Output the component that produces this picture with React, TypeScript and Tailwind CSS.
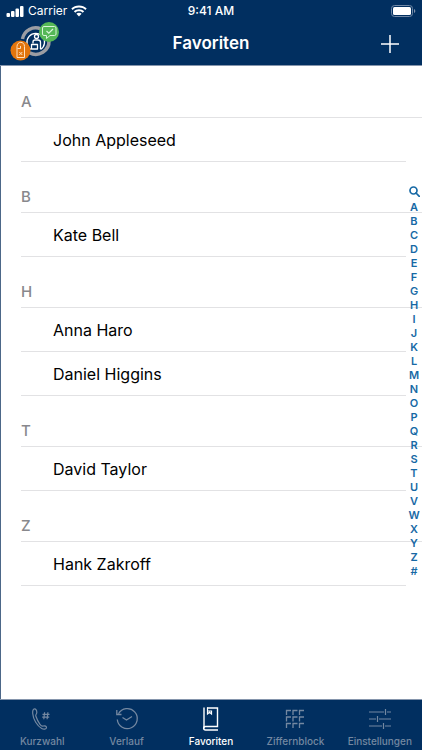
import { useState } from "react";

interface IContactGroup {
  letter: string;
  names: string[];
}

const groups: IContactGroup[] = [
  { letter: "A", names: ["John Appleseed"] },
  { letter: "B", names: ["Kate Bell"] },
  { letter: "H", names: ["Anna Haro", "Daniel Higgins"] },
  { letter: "T", names: ["David Taylor"] },
  { letter: "Z", names: ["Hank Zakroff"] },
];

const indexLetters = "ABCDEFGHIJKLMNOPQRSTUVWXYZ#".split("");

const StatusBar = () => (
  <div className="grid h-[22px] grid-cols-3 items-center px-1.5 text-xs text-white">
    <div className="flex items-center gap-1">
      <svg width="18" height="11" viewBox="0 0 18 11" fill="currentColor">
        <rect x="0.500" y="7" width="3.500" height="4" rx="1" />
        <rect x="5" y="5" width="3.500" height="6" rx="1" />
        <rect x="9.500" y="2.500" width="3.500" height="8.500" rx="1" />
        <rect x="14" y="0" width="3.500" height="11" rx="1" />
      </svg>
      <span>Carrier</span>
      <svg width="16" height="12" viewBox="0 0 16 12" fill="currentColor">
        <path d="M8 .5C5 .5 2.300 1.600.3 3.500l1.400 1.500C3.400 3.400 5.600 2.600 8 2.600s4.600.8 6.300 2.400l1.400-1.500C13.700 1.600 11 .5 8 .5z" />
        <path d="M8 4.200c-2 0-3.800.7-5.200 2l1.500 1.500C5.300 6.800 6.600 6.300 8 6.300s2.700.5 3.700 1.400l1.500-1.500C11.800 4.900 10 4.200 8 4.200z" />
        <path d="M8 7.800c-1 0-1.900.4-2.600 1L8 11.500l2.600-2.700c-.7-.6-1.600-1-2.600-1z" />
      </svg>
    </div>
    <span className="text-center font-medium">9:41 AM</span>
    <div className="flex justify-end">
      <svg width="25" height="12" viewBox="0 0 25 12" fill="none">
        <rect x="0.5" y="0.5" width="21" height="11" rx="3" stroke="#7088a6" />
        <rect x="2" y="2" width="18" height="8" rx="1.500" fill="#fff" />
        <path d="M23 4v4c1.800-.6 1.800-3.400 0-4z" fill="#8092ab" />
      </svg>
    </div>
  </div>
);

const PresenceLogo = () => (
  <svg width="50" height="40" viewBox="0 0 50 40" fill="none">
    <g stroke="#9b9da3" strokeWidth="3.500">
      <path d="M12.500 17A13.300 13.300 0 0 1 31 7" />
      <path d="M39 18.500a13.300 13.300 0 0 1-19.500 12.300" />
    </g>
    <path
      d="M21 27.500a8.800 8.800 0 1 1 9.500 0"
      stroke="#fff"
      strokeWidth="1.300"
    />
    <g stroke="#fff" strokeWidth="1.300" strokeLinejoin="round">
      <circle cx="26.500" cy="14.500" r="2" />
      <path d="M23 21.500V20c0-1.500 1-2 2-2h3c1.500 0 2.500.7 2.500 2.300V27" />
      <path d="M21.500 22.500h6V27h-6z" />
    </g>
    <circle cx="39" cy="10" r="10" fill="#55b757" />
    <path
      d="M34 4.500h10.500q1.500 0 1.500 1.500v6q0 1.500-1.500 1.500H40L36.500 16.500v-3H34q-1.500 0-1.500-1.500V6Q32.500 4.500 34 4.500z"
      stroke="#d9f4da"
      strokeWidth="1"
      strokeLinejoin="round"
    />
    <path d="M36.500 9l2.300 2.200L43 7" stroke="#d9f4da" strokeWidth="1.200" />
    <circle cx="10.500" cy="28.500" r="10" fill="#e2750d" />
    <g stroke="#ffe0bd" strokeWidth="1" strokeLinejoin="round">
      <path d="M7 35.500V24.500c0-5.500 7.500-5.500 7.500 0v11z" />
      <path d="M7.500 26.500h3V24" />
      <path d="M9.300 30l3 3M12.300 30l-3 3" />
    </g>
  </svg>
);

const KurzwahlIcon = () => (
  <svg width="24" height="24" viewBox="0 0 24 24" fill="none" stroke="currentColor" strokeWidth="1.200">
    <path
      d="M6.800 5.500C6.800 3.500 5.800 1.800 4.600 1.800 3 1.800 2.500 4 2.700 6.500c.5 6 4.500 12.500 9 15 2 1.200 4.600.8 4.800-.8.200-1.300-1.600-2.300-3.200-1.700-1.300.5-2.300-.3-3.300-1.700-1.800-2.500-3.300-5.500-4.200-8.300-.5-1.500 1-1.700 1-3.500z"
      strokeLinejoin="round"
    />
    <path d="M14.600 5.200l-.8 7M17.900 5.200l-.8 7M12.500 7.400h7M12.200 10.200h7" />
  </svg>
);

const VerlaufIcon = () => (
  <svg width="24" height="24" viewBox="0 0 24 24" fill="none" stroke="currentColor" strokeWidth="1.300">
    <path d="M3.500 6.800A10 10 0 1 1 2.300 12.500" />
    <path d="M1.800 3v4.500h4.700M7.500 10.500l4 2.500 5.500-3.500" />
  </svg>
);

const FavoritenIcon = () => (
  <svg width="24" height="24" viewBox="0 0 24 24" fill="none" stroke="currentColor" strokeWidth="1.400">
    <path d="M19 23H6.500C4 23 4 19.500 6.500 19.500H18.500V1H8" />
    <path d="M5 .5V21.500" />
    <path d="M8.500 .5v6.500l2-1.700 2 1.700V4H8.500" strokeWidth="1.200" />
  </svg>
);

const ZiffernblockIcon = () => (
  <svg width="24" height="24" viewBox="0 0 24 24" fill="none" stroke="currentColor" strokeWidth="1.300">
    {[3.5, 10, 16.5].map((y) =>
      [3.5, 10, 16.5].map((x) => <path key={`${x}-${y}`} d={`M${x} ${y + 4.5}V${y}h4.500`} />)
    )}
  </svg>
);

const EinstellungenIcon = () => (
  <svg width="24" height="24" viewBox="0 0 24 24" fill="none" stroke="currentColor" strokeWidth="1.200">
    <path d="M1 5h15M19 5h4M1 12h7M11 12h12M1 19h13M17 19h6" />
    <path d="M17.500 2v6M9.500 9v6M15.500 16v6" />
  </svg>
);

const tabs = [
  { label: "Kurzwahl", Icon: KurzwahlIcon },
  { label: "Verlauf", Icon: VerlaufIcon },
  { label: "Favoriten", Icon: FavoritenIcon },
  { label: "Ziffernblock", Icon: ZiffernblockIcon },
  { label: "Einstellungen", Icon: EinstellungenIcon },
];

const App = () => {
  const [activeTab, setActiveTab] = useState("Favoriten");

  return (
    <div className="flex min-h-screen flex-col bg-white font-['Inter',sans-serif]">
      <header className="border-b border-[#8595ac] bg-[#012f60]">
        <StatusBar />
        <div className="grid h-[43px] grid-cols-3 items-center px-2.5 text-white">
          <button aria-label="Status" className="justify-self-start pb-1">
            <PresenceLogo />
          </button>
          <h1 className="text-center text-[17px] font-semibold">Favoriten</h1>
          <button aria-label="Kontakt hinzufügen" className="justify-self-end px-2.5">
            <svg width="24" height="24" viewBox="0 0 24 24" stroke="currentColor" strokeWidth="1.500">
              <path d="M12 3v18M3 12h18" />
            </svg>
          </button>
        </div>
      </header>

      <main className="relative flex-1 border-l border-[#4c6788] pl-5 pt-px">
        {groups.map(({ letter, names }) => (
          <section key={letter}>
            <h2 className="flex h-[51px] items-end border-b border-[#e2e2e4] pb-1 text-[15px] font-medium text-[#88888c]">
              {letter}
            </h2>
            <ul className="mr-4">
              {names.map((name) => (
                <li
                  key={name}
                  className="flex h-11 items-center border-b border-[#e2e2e4] pl-8 text-base text-black"
                >
                  {name}
                </li>
              ))}
            </ul>
          </section>
        ))}

        <nav
          aria-label="Index"
          className="absolute inset-y-0 right-0 flex w-4 flex-col items-center justify-center pb-1 text-[11px] font-semibold leading-[14px] text-[#1769a5]"
        >
          <button aria-label="Suchen" className="flex h-4 items-center">
            <svg width="11" height="11" viewBox="0 0 11 11" fill="none" stroke="currentColor" strokeWidth="1.700">
              <circle cx="4.500" cy="4.500" r="3.500" />
              <path d="M7 7l3.300 3.300" strokeLinecap="round" />
            </svg>
          </button>
          {indexLetters.map((letter) => (
            <a key={letter} href={`#${letter}`}>
              {letter}
            </a>
          ))}
        </nav>
      </main>

      <nav className="grid h-[51px] grid-cols-5 border-t border-[#8595ac] bg-[#012f60]">
        {tabs.map(({ label, Icon }) => (
          <button
            key={label}
            onClick={() => setActiveTab(label)}
            className={`flex flex-col items-center gap-1 pt-[7px] text-[10px] font-medium leading-3 ${
              activeTab === label ? "text-white" : "text-[#7488a1]"
            }`}
          >
            <Icon />
            {label}
          </button>
        ))}
      </nav>
    </div>
  );
};

export default App;
